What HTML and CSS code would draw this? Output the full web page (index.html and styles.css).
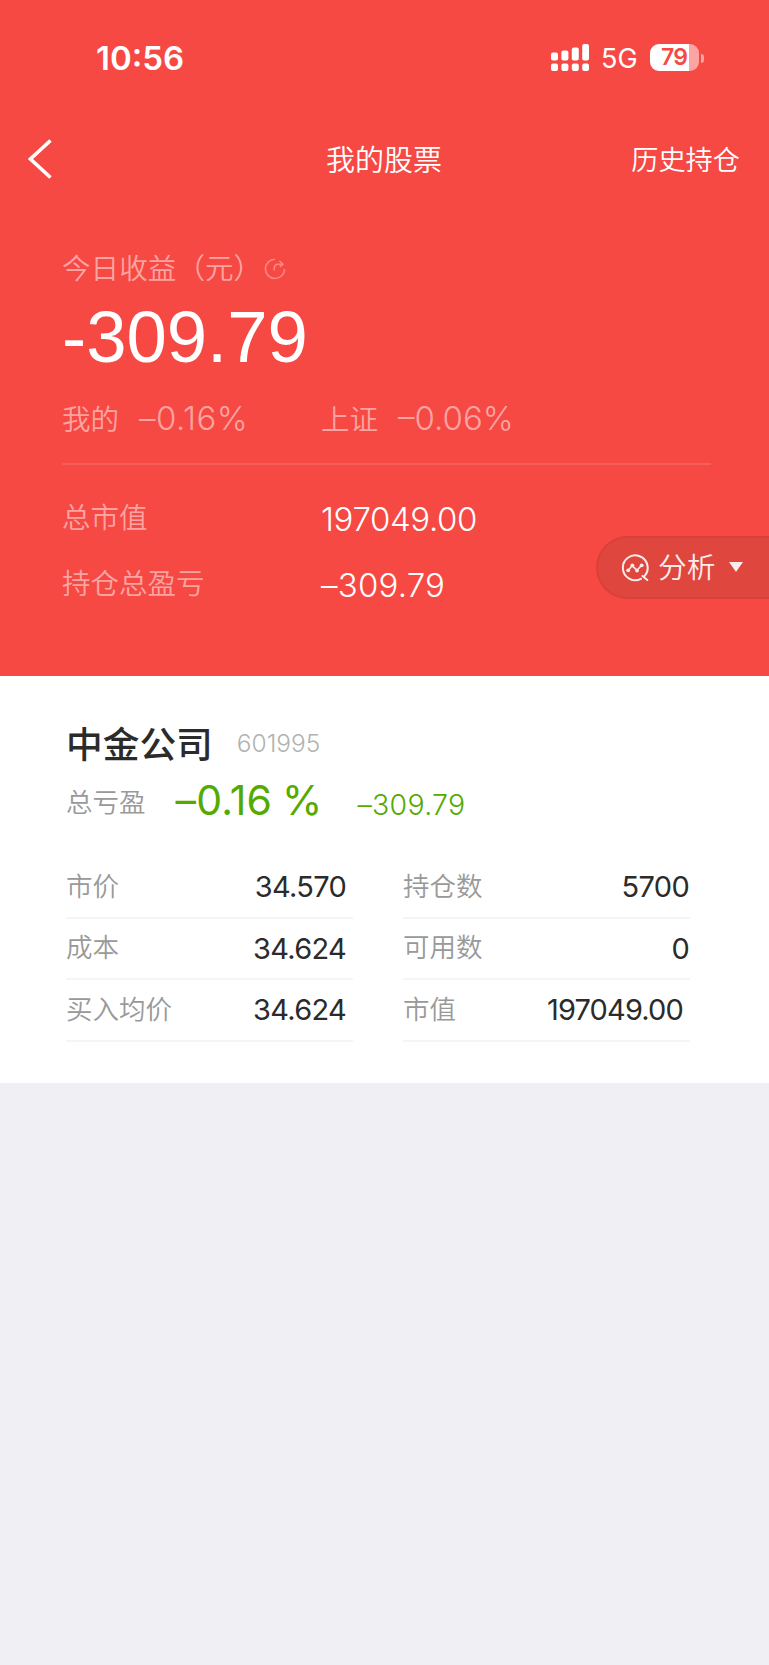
FILE: index.html
```html
<!DOCTYPE html>
<html lang="zh-CN">
<head>
    <meta charset="UTF-8">
    <meta name="viewport" content="width=device-width, initial-scale=1.0">
    <title>我的股票</title>
    <link rel="stylesheet" href="styles.css">
</head>
<body>
    <header class="summary">
        <div class="status-bar">
            <span class="time">10:56</span>
            <svg class="signal" width="38" height="28" viewBox="0 0 38 28" fill="#fff">
                <rect x="0" y="8.5" width="7" height="8" rx="2"/>
                <rect x="10.4" y="6.5" width="7" height="10" rx="2"/>
                <rect x="20.8" y="3.5" width="7" height="13" rx="2"/>
                <rect x="31.2" y="0" width="6.8" height="16.5" rx="2"/>
                <rect x="0" y="19.5" width="7" height="7.5" rx="2"/>
                <rect x="10.4" y="19.5" width="7" height="7.5" rx="2"/>
                <rect x="20.8" y="19.5" width="7" height="7.5" rx="2"/>
                <rect x="31.2" y="19.5" width="6.8" height="7.5" rx="2"/>
            </svg>
            <span class="network">5G</span>
            <div class="battery"><span>79</span></div>
            <div class="battery-tip"></div>
        </div>

        <nav class="nav">
            <svg class="back" width="25" height="42" viewBox="0 0 25 42" fill="none" stroke="#fff" stroke-width="3.6">
                <path d="M22.5 2.5 2.5 21l20 18.5"/>
            </svg>
            <h1>我的股票</h1>
            <a class="history">历史持仓</a>
        </nav>

        <div class="today-label">
            <span>今日收益（元）</span>
            <svg width="22" height="22" viewBox="0 0 22 22" fill="none" stroke="#fb8783" stroke-width="1.6">
                <path d="M11 1.3A9.6 9.6 0 1 0 20.6 11"/>
                <path d="M10.3 12.5V10Q10.3 6.2 14 6.2h4.6M15.5 3l3.4 3.2-3.1 2.7"/>
            </svg>
        </div>
        <div class="today-value">-309.79</div>

        <div class="compare">
            <div class="compare-item"><span>我的</span><b class="mine">–0.16%</b></div>
            <div class="compare-item"><span>上证</span><b>–0.06%</b></div>
        </div>

        <div class="totals">
            <div class="total-row"><span>总市值</span><b class="market">197049.00</b></div>
            <div class="total-row"><span>持仓总盈亏</span><b class="profit">–309.79</b></div>
        </div>

        <div class="analysis">
            <svg width="28" height="28" viewBox="0 0 28 28" fill="none" stroke="#fdeceb" stroke-width="2" stroke-linecap="round" stroke-linejoin="round">
                <path d="M23 22.6A12.4 12.4 0 1 0 20 24.8M21.5 22l4.8 4"/>
                <path d="M7.2 16.2l4-4.4 4.8 4.4 4.6-5" stroke-width="1.6"/>
                <g fill="#fdeceb" stroke="none">
                    <circle cx="7.2" cy="16.3" r="1.9"/>
                    <circle cx="11.4" cy="11.3" r="1.9"/>
                    <circle cx="16" cy="16.6" r="1.9"/>
                    <circle cx="20.7" cy="11.3" r="1.9"/>
                </g>
            </svg>
            <span>分析</span>
            <i class="arrow"></i>
        </div>
    </header>

    <main class="stock">
        <div class="stock-head">
            <h2>中金公司</h2>
            <span class="code">601995</span>
        </div>
        <div class="stock-profit">
            <span class="label">总亏盈</span>
            <span class="percent">–0.16 %</span>
            <span class="amount">–309.79</span>
        </div>
        <div class="details">
            <div class="detail"><span>市价</span><b>34.570</b></div>
            <div class="detail right"><span>持仓数</span><b>5700</b></div>
            <div class="detail"><span>成本</span><b>34.624</b></div>
            <div class="detail right"><span>可用数</span><b>0</b></div>
            <div class="detail"><span>买入均价</span><b>34.624</b></div>
            <div class="detail right wide"><span>市值</span><b>197049.00</b></div>
        </div>
    </main>
</body>
</html>
```
FILE: styles.css
```css
* {
    box-sizing: border-box;
}

body {
    margin: 0;
    min-height: 1665px;
    background: #efeff4;
    color: #2b2b2b;
    font-family: Inter, "Noto Sans CJK SC", sans-serif;
    font-weight: 350;
}

h1, h2, b {
    margin: 0;
    font-weight: inherit;
}

svg {
    display: block;
    flex: none;
}

span, b, h1, h2, a {
    white-space: nowrap;
}

.summary {
    position: relative;
    height: 676px;
    background: #f64944;
    color: #fff;
}

/* status bar */
.status-bar {
    display: flex;
    align-items: center;
    height: 116px;
    padding-left: 96px;
}

.time {
    width: 455px;
    padding-bottom: 1px;
    font-size: 33px;
    font-weight: 600;
}

.network {
    width: 49px;
    margin-left: 12px;
    font-size: 27px;
    font-weight: 400;
}

.battery {
    width: 49px;
    height: 27px;
    margin-bottom: 1px;
    border-radius: 9px;
    background: linear-gradient(to right, #fff 39px, #fba4a1 39px);
    color: #f64944;
    font-size: 23px;
    font-weight: 600;
    line-height: 27px;
    padding-left: 11px;
    letter-spacing: -0.8px;
}

.battery-tip {
    width: 3px;
    height: 9px;
    margin-left: 2px;
    border-radius: 0 4px 4px 0;
    background: #fba4a1;
}

/* nav */
.nav {
    display: grid;
    grid-template-columns: 1fr auto 1fr;
    align-items: center;
    height: 86px;
    padding: 0 29px 0 28px;
}

.nav h1 {
    padding-top: 4px;
    font-size: 29px;
    line-height: 42px;
}

.history {
    justify-self: end;
    padding-top: 4px;
    font-size: 27.2px;
    line-height: 40px;
}

/* today */
.today-label {
    display: flex;
    align-items: center;
    height: 40px;
    margin: 44px 0 0 62px;
    color: #fba4a1;
    font-size: 28.6px;
}

.today-label svg {
    margin: 5px 0 0 2px;
}

.today-value {
    height: 102px;
    padding-left: 62px;
    font-family: "Liberation Sans", Arial, sans-serif;
    font-size: 72.5px;
    font-weight: 400;
    line-height: 101px;
}

.compare {
    display: flex;
    height: 77px;
    margin: 0 58px 0 62px;
    border-bottom: 2px solid #f85d58;
    color: #fba4a1;
    font-size: 28.5px;
}

.compare-item {
    display: flex;
    align-items: center;
    width: 259px;
    height: 59px;
}

.compare-item b {
    margin-left: 20px;
    font-size: 33px;
}

.compare-item .mine {
    letter-spacing: 0.5px;
}

.totals {
    padding: 17px 0 0 62px;
}

.total-row {
    display: flex;
    align-items: center;
    height: 66px;
}

.total-row span {
    width: 259px;
    color: #fba4a1;
    font-size: 28.5px;
}

.total-row b {
    padding-top: 8px;
    font-size: 33px;
}

.total-row .market {
    letter-spacing: -0.4px;
}

.total-row .profit {
    letter-spacing: 0.2px;
}

/* floating button on the right edge */
.analysis {
    position: absolute;
    top: 536px;
    right: 0;
    display: flex;
    align-items: center;
    width: 173px;
    height: 63px;
    padding-left: 23px;
    border: 2px solid #d94039;
    border-right: 0;
    border-radius: 32px 0 0 32px;
    background: #df463e;
    color: #fdeceb;
    font-size: 28.7px;
}

.analysis span {
    margin-left: 9px;
    padding-bottom: 4px;
}

.arrow {
    margin: 0 0 2px 14px;
    border: 7px solid transparent;
    border-top: 10px solid #fdeceb;
    border-bottom: 0;
}

/* stock card */
.stock {
    height: 407px;
    padding: 38px 0 0 66px;
    background: #fff;
}

.stock-head {
    display: flex;
    align-items: center;
    height: 56px;
}

.stock-head h2 {
    font-size: 36.7px;
    font-weight: 500;
}

.code {
    margin-left: 24px;
    padding-top: 2px;
    color: #b2b2b2;
    font-size: 24.5px;
    font-weight: 300;
}

.stock-profit {
    display: flex;
    align-items: center;
    height: 60px;
    color: #55aa00;
}

.label {
    color: #999;
    font-size: 26.5px;
}

.percent {
    margin-left: 30px;
    font-size: 41px;
    font-weight: 400;
    letter-spacing: 0.2px;
    word-spacing: -2px;
}

.amount {
    margin-left: 35px;
    padding-top: 9px;
    font-size: 28.5px;
    letter-spacing: 0.3px;
}

.details {
    display: grid;
    grid-template-columns: 287px 287px;
    column-gap: 50px;
    padding-top: 27px;
}

.detail {
    display: flex;
    align-items: center;
    justify-content: space-between;
    height: 61.5px;
    padding-right: 7px;
    border-bottom: 2px solid #f5f5f5;
}

.detail span {
    padding-bottom: 5px;
    color: #999;
    font-size: 26.5px;
}

.detail b {
    font-size: 29px;
    font-weight: 400;
    letter-spacing: -0.7px;
}

.right {
    padding-right: 1px;
}

.wide {
    padding-right: 7px;
}

.wide b {
    letter-spacing: -0.85px;
}
```
